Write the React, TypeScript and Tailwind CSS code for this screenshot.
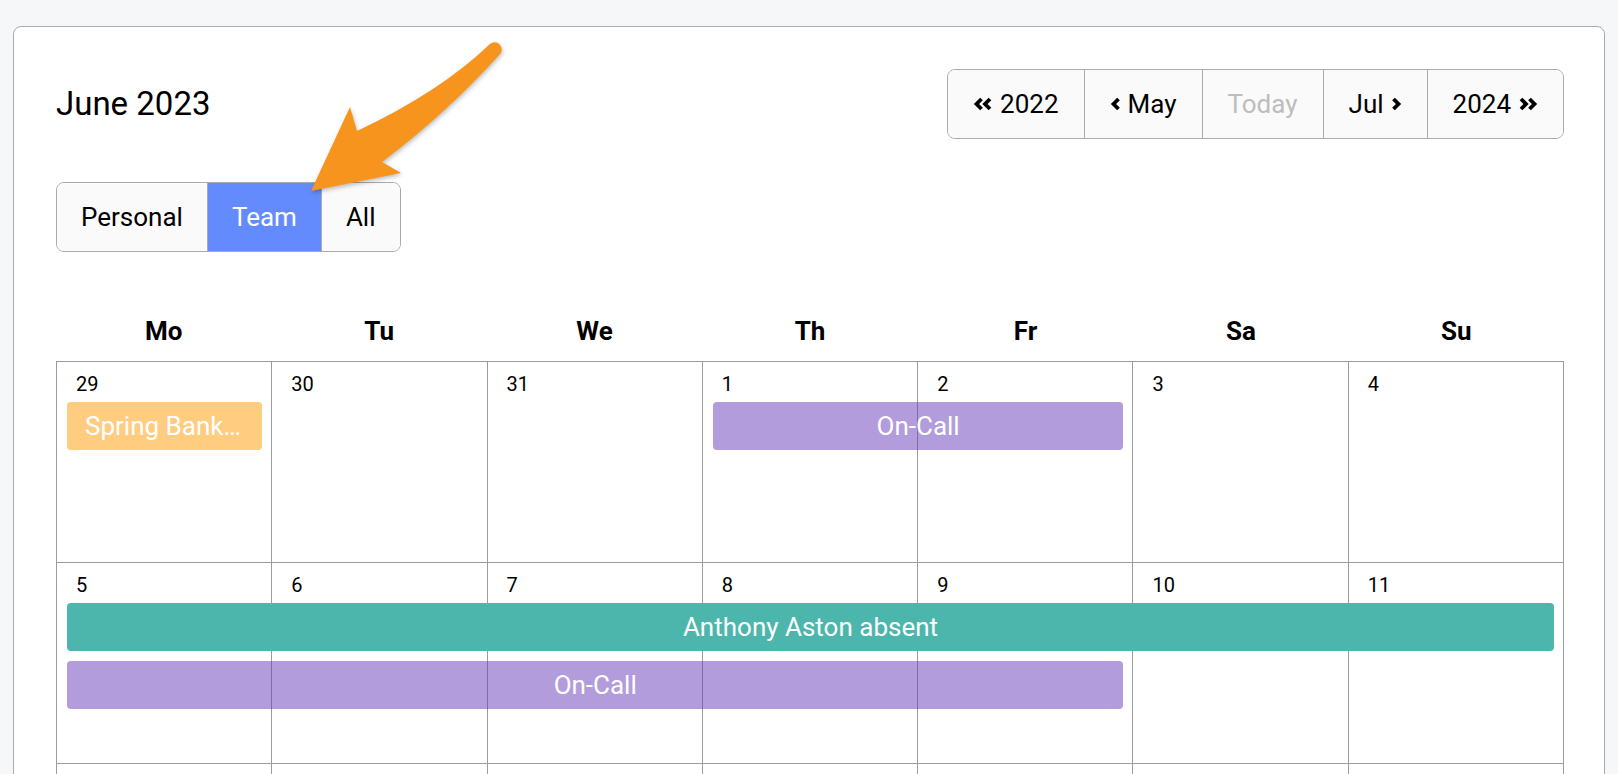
import React from "react";

type CalEvent = {
  title: string;
  start: number;
  span: number;
  row: number;
  color: string;
};

type Week = { days: number[]; events: CalEvent[] };

const weekdays = ["Mo", "Tu", "We", "Th", "Fr", "Sa", "Su"];

const colStart = [
  "col-start-1",
  "col-start-2",
  "col-start-3",
  "col-start-4",
  "col-start-5",
  "col-start-6",
  "col-start-7",
];
const colSpan = [
  "",
  "col-span-1",
  "col-span-2",
  "col-span-3",
  "col-span-4",
  "col-span-5",
  "col-span-6",
  "col-span-7",
];
const rowStart = ["", "row-start-1", "row-start-2", "row-start-3", "row-start-4"];

const PURPLE = "bg-[#673ab7]/50";

const weeks: Week[] = [
  {
    days: [29, 30, 31, 1, 2, 3, 4],
    events: [
      { title: "Spring Bank Holiday", start: 0, span: 1, row: 2, color: "bg-[#ffcc80]" },
      { title: "On-Call", start: 3, span: 2, row: 2, color: PURPLE },
    ],
  },
  {
    days: [5, 6, 7, 8, 9, 10, 11],
    events: [
      { title: "Anthony Aston absent", start: 0, span: 7, row: 2, color: "bg-[#4db6ac]" },
      { title: "On-Call", start: 0, span: 5, row: 3, color: PURPLE },
    ],
  },
  { days: [12, 13, 14, 15, 16, 17, 18], events: [] },
  { days: [19, 20, 21, 22, 23, 24, 25], events: [] },
  { days: [26, 27, 28, 29, 30, 1, 2], events: [] },
];

// bold angle / double-angle glyphs used on the nav buttons
function Chevron({ dir, double }: { dir: "left" | "right"; double?: boolean }) {
  const w = double ? 20 : 11;
  const pts =
    dir === "left"
      ? double
        ? ["8.5,2 3.5,7 8.5,12", "17,2 12,7 17,12"]
        : ["8.5,2 3.5,7 8.5,12"]
      : double
      ? ["3,2 8,7 3,12", "11.5,2 16.5,7 11.5,12"]
      : ["2.5,2 7.5,7 2.5,12"];
  return (
    <svg width={w} height={14} viewBox={`0 0 ${w} 14`} fill="none" aria-hidden>
      {pts.map((p) => (
        <polyline key={p} points={p} stroke="currentColor" strokeWidth={3.8} />
      ))}
    </svg>
  );
}

function NavButtons() {
  const btn =
    "flex h-[68px] items-center gap-[7px] border-l border-[#aaa] bg-[#fafafa] px-[25px] text-[26px] first:border-l-0";
  return (
    <div className="flex overflow-hidden rounded-[8px] border border-[#aaa]">
      <button type="button" className={btn}>
        <Chevron dir="left" double />
        <span>2022</span>
      </button>
      <button type="button" className={btn}>
        <Chevron dir="left" />
        <span>May</span>
      </button>
      <button type="button" disabled className={`${btn} text-[#bdbdbd]`}>
        Today
      </button>
      <button type="button" className={btn}>
        <span>Jul</span>
        <Chevron dir="right" />
      </button>
      <button type="button" className={btn}>
        <span>2024</span>
        <Chevron dir="right" double />
      </button>
    </div>
  );
}

function ScopeToggle() {
  const items = ["Personal", "Team", "All"];
  const active = "Team";
  return (
    <div className="inline-flex overflow-hidden rounded-[8px] border border-[#aaa]">
      {items.map((it) => (
        <button
          key={it}
          type="button"
          className={
            "h-[68px] border-l border-[#aaa] px-[24px] text-[26px] first:border-l-0 " +
            (it === active ? "bg-[#648bfd] text-white" : "bg-[#fafafa] text-black")
          }
        >
          {it}
        </button>
      ))}
    </div>
  );
}

function WeekRow({ week }: { week: Week }) {
  return (
    <div className="grid h-[201px] grid-cols-7 grid-rows-[30px_48px_48px_1fr] gap-y-[10px]">
      {week.days.map((d, i) => (
        <div
          key={i}
          className={`${colStart[i]} row-span-full row-start-1 border-r border-b border-[#9c9c9c] pl-[19px] pt-[10px] text-[20px] leading-[24px]`}
        >
          {d}
        </div>
      ))}
      {week.events.map((ev, i) => (
        <div
          key={i}
          title={ev.title}
          className={`${colStart[ev.start]} ${colSpan[ev.span]} ${rowStart[ev.row]} mx-[10px] truncate rounded-[4px] px-[18px] text-center text-[26px] leading-[48px] text-white ${ev.color}`}
        >
          {ev.title}
        </div>
      ))}
    </div>
  );
}

export default function App() {
  return (
    <div className="relative h-screen overflow-hidden bg-[#f6f7f9] px-[13px] pt-[26px] font-['Roboto',sans-serif] text-black">
      <div className="rounded-[8px] border border-[#aaa] bg-white pl-[42px] pr-[40px] pt-[42px] pb-10">
        <div className="flex items-center justify-between">
          <h1 className="text-[33px] leading-[40px]">June 2023</h1>
          <NavButtons />
        </div>

        <div className="mt-[43px]">
          <ScopeToggle />
        </div>

        <div className="mt-[59px] mb-[10px] grid grid-cols-7">
          {weekdays.map((w) => (
            <div key={w} className="text-center text-[26px] font-bold leading-[40px]">
              {w}
            </div>
          ))}
        </div>

        <div className="border-l border-t border-[#9c9c9c]">
          {weeks.map((w, i) => (
            <WeekRow key={i} week={w} />
          ))}
        </div>
      </div>

      {/* annotation arrow pointing at the Team toggle */}
      <svg
        className="pointer-events-none absolute left-0 top-0"
        width={1618}
        height={774}
        viewBox="0 0 1618 774"
        aria-hidden
      >
        <path
          d="M 490 44 Q 440 92 357 131 L 350 107 L 311 191 L 401 173 L 382 162 Q 448 112 500 54 A 7.1 7.1 0 0 0 490 44 Z"
          fill="#f7941e"
          style={{ filter: "drop-shadow(1px 2px 2px rgba(0,0,0,0.25))" }}
        />
      </svg>
    </div>
  );
}
